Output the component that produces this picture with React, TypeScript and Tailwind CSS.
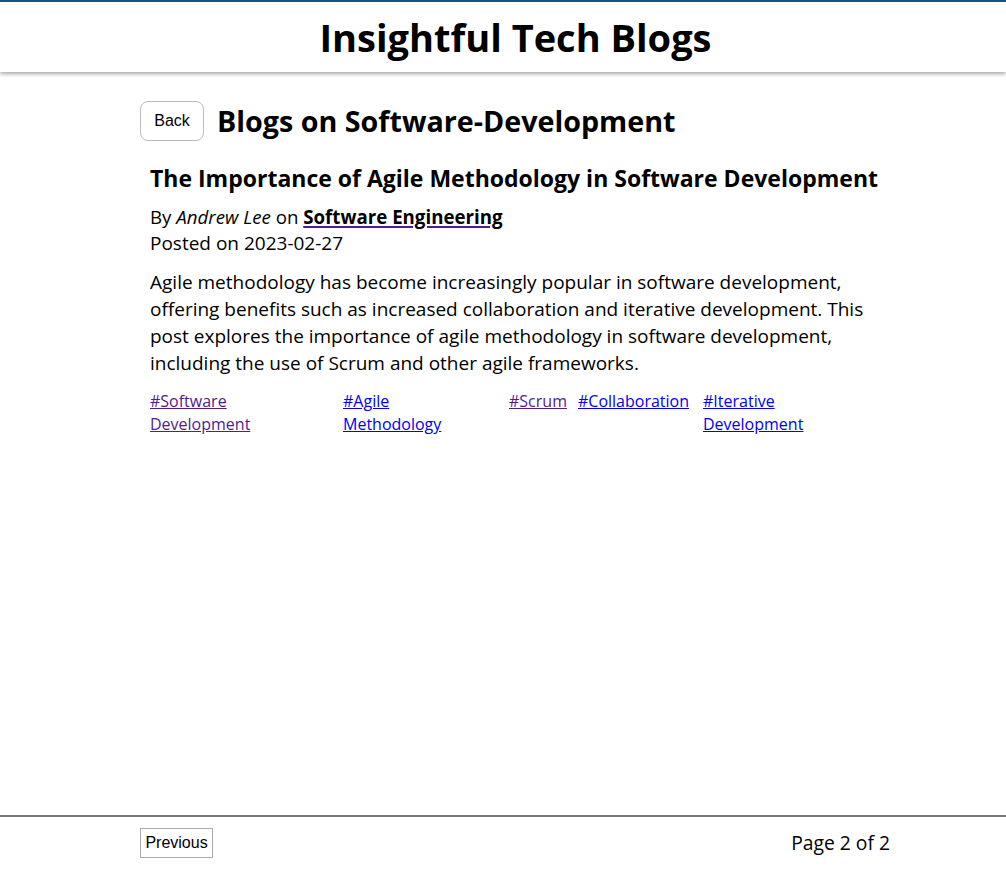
import React from "react";

const tags = [
  { lines: ["#Software", "Development"], w: "w-[183px]", visited: true },
  { lines: ["#Agile", "Methodology"], w: "w-[156px]", visited: false },
  { lines: ["#Scrum"], w: "w-[59px]", visited: true },
  { lines: ["#Collaboration"], w: "w-[115px]", visited: false },
  { lines: ["#Iterative", "Development"], w: "w-[137px]", visited: false },
];

const body = [
  "Agile methodology has become increasingly popular in software development,",
  "offering benefits such as increased collaboration and iterative development. This",
  "post explores the importance of agile methodology in software development,",
  "including the use of Scrum and other agile frameworks.",
];

function Header() {
  return (
    <header className="border-t-2 border-[#0e5a80] bg-white shadow-[0_2px_4px_rgba(0,0,0,0.35)] h-[72px] flex items-center justify-center pl-[25px]">
      <h1 className="text-[38px] font-bold text-black leading-none">Insightful Tech Blogs</h1>
    </header>
  );
}

function Article() {
  return (
    <article className="pl-[10px] pt-[22px] w-[760px]">
      <h2 className="text-[23px] font-bold leading-[30px] whitespace-nowrap">
        The Importance of Agile Methodology in Software Development
      </h2>
      <div className="mt-[10px] text-[18.7px] leading-[27px]">
        By <em>Andrew Lee</em> on{" "}
        <a href="#" className="font-bold underline decoration-[#551a8b] decoration-2 underline-offset-2">
          Software Engineering
        </a>
      </div>
      <div className="text-[19px] leading-[27px]">Posted on 2023-02-27</div>
      <p className="mt-[12px] text-[19px] leading-[27px] whitespace-nowrap">
        {body.map((l) => (
          <span key={l} className="block">
            {l}
          </span>
        ))}
      </p>
      <div className="mt-[13px] flex gap-[10px] text-[16px] leading-[23px]">
        {tags.map((t) => (
          <a
            key={t.lines.join(" ")}
            href="#"
            className={`${t.w} shrink-0 underline ${t.visited ? "text-[#551a8b]" : "text-[#0000ee]"}`}
          >
            {t.lines.map((l) => (
              <span key={l} className="block">
                {l}
              </span>
            ))}
          </a>
        ))}
      </div>
    </article>
  );
}

export default function App() {
  return (
    <div className="min-h-[869px] flex flex-col bg-white text-black font-['Open_Sans',sans-serif]">
      <Header />
      <main className="flex-1 pl-[140px] pt-[29px]">
        <div className="flex items-center gap-[13px]">
          <button className="w-[64px] h-[40px] rounded-[8px] border border-[#bbbbbb] bg-white text-[16px] font-['Liberation_Sans',sans-serif]">
            Back
          </button>
          <h2 className="text-[28.7px] font-bold leading-none">Blogs on Software-Development</h2>
        </div>
        <Article />
      </main>
      <footer className="border-t-2 border-[#777777] h-[54px] flex items-center justify-between pl-[140px] pr-[116px]">
        <button className="w-[73px] h-[30px] border border-[#aaaaaa] bg-white text-[16px] font-['Liberation_Sans',sans-serif]">
          Previous
        </button>
        <span className="text-[19.3px]">Page 2 of 2</span>
      </footer>
    </div>
  );
}
